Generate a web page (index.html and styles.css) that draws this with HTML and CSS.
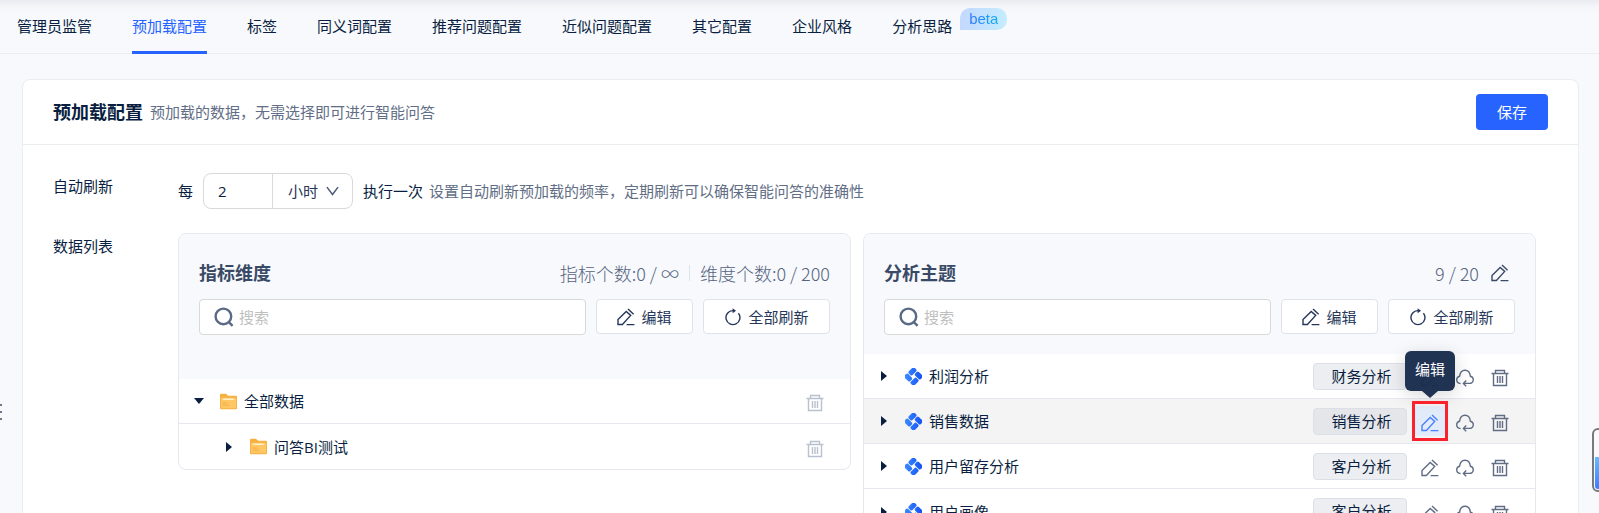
FILE: index.html
```html
<!DOCTYPE html>
<html lang="zh-CN">
<head>
    <meta charset="UTF-8">
    <meta name="viewport" content="width=device-width, initial-scale=1.0">
    <title>预加载配置</title>
    <link rel="stylesheet" href="styles.css">
</head>
<body>
    <!-- Shared icons -->
    <svg class="sprite" aria-hidden="true">
        <defs>
            <linearGradient id="logo-fill" gradientUnits="userSpaceOnUse" x1="2" y1="14" x2="14" y2="2">
                <stop offset="0" stop-color="#3b8cff"/>
                <stop offset="1" stop-color="#1450f5"/>
            </linearGradient>
        </defs>
        <symbol id="icon-edit" viewBox="0 0 18 18">
            <path d="M1 16.5V11.6L9.2 3.4L13.7 7.4L5.4 16.5ZM11 1L16.6 6.2M9.6 16.6H17.4"/>
        </symbol>
        <symbol id="icon-refresh" viewBox="0 0 18 18">
            <path d="M14.4 5.2A7 7 0 1 1 9 2.6H10.6"/>
            <path d="M8.6 .2L12 2.8L8.6 5.2Z" fill="currentColor" stroke="none"/>
        </symbol>
        <symbol id="icon-trash" viewBox="0 0 18 18">
            <path d="M.5 4.5H17.5M4.5 4.5V1.5H13.5V4.5M2.5 4.5V16.5H15.5V4.5M6.5 7V14M9 7V14M11.5 7V14"/>
        </symbol>
        <symbol id="icon-cloud" viewBox="0 0 18 18">
            <path d="M4.6 14.6C2.3 14.4 .7 12.8 .7 10.8C.7 9 1.9 7.6 3.6 7.2C4 3.6 6.1 1.2 9 1.2S14 3.6 14.4 7.2C16.1 7.6 17.3 9 17.3 10.8C17.3 12.9 15.6 14.4 13.3 14.4H7.6M10.2 11.6L7.4 14.4L10.2 17.2"/>
        </symbol>
        <symbol id="icon-search" viewBox="0 0 20 20">
            <path d="M17.2 9.4A7.8 7.8 0 1 1 1.6 9.4A7.8 7.8 0 1 1 17.2 9.4M14.6 14.8L18.6 18.8"/>
        </symbol>
        <symbol id="icon-folder" viewBox="0 0 16 16">
            <path d="M0 1.6Q0 .6 1 .6H5.6L7.6 2.6H15Q16 2.6 16 3.6V14.4Q16 15.4 15 15.4H1Q0 15.4 0 14.4Z" fill="#f5b041"/>
            <path d="M.8 4.4H15.2V14.4H.8Z" fill="#ffc664"/>
            <path d="M3.4 5.2H12.6L13.6 6.6H2.4Z" fill="#fff0c8"/>
            <path d="M2.4 9.5H6.4M2.4 11.5H8.6" stroke="#f5b041"/>
        </symbol>
        <symbol id="icon-logo" viewBox="0 0 16 16">
            <g fill="url(#logo-fill)" transform="rotate(45 8 8)">
                <rect x="1.4" y="1.4" width="4.9" height="7.7" rx="1.5"/>
                <rect x="7.1" y="1.4" width="7.5" height="4.9" rx="1.5"/>
                <rect x="9.7" y="7" width="4.9" height="7.6" rx="1.5"/>
                <rect x="1.4" y="9.8" width="7.5" height="4.8" rx="1.5"/>
            </g>
        </symbol>
    </svg>

    <nav class="tabs">
        <a class="tab" href="#">管理员监管</a>
        <a class="tab active" href="#">预加载配置</a>
        <a class="tab" href="#">标签</a>
        <a class="tab" href="#">同义词配置</a>
        <a class="tab" href="#">推荐问题配置</a>
        <a class="tab" href="#">近似问题配置</a>
        <a class="tab" href="#">其它配置</a>
        <a class="tab" href="#">企业风格</a>
        <a class="tab" href="#">分析思路<span class="beta"><span>beta</span></span></a>
    </nav>

    <main class="card">
        <header class="card-header">
            <h1>预加载配置</h1>
            <p class="hint">预加载的数据，无需选择即可进行智能问答</p>
            <button class="save" type="button">保存</button>
        </header>

        <div class="form">
            <div class="form-row">
                <label class="form-label" for="interval">自动刷新</label>
                <div class="interval">
                    <span>每</span>
                    <div class="interval-box">
                        <input id="interval" type="text" inputmode="numeric" value="2">
                        <div class="unit">
                            <select aria-label="时间单位">
                                <option>小时</option>
                            </select>
                            <svg class="chevron" viewBox="0 0 14 10"><path d="M1 .8L7 8.8L13 .8"/></svg>
                        </div>
                    </div>
                    <span>执行一次</span>
                    <span class="hint">设置自动刷新预加载的频率，定期刷新可以确保智能问答的准确性</span>
                </div>
            </div>

            <div class="form-row">
                <span class="form-label">数据列表</span>
                <div class="panels">
                    <section class="panel">
                        <div class="panel-head tall">
                            <div class="panel-title">
                                <h2>指标维度</h2>
                                <span class="count">指标个数:0 / ∞</span>
                                <i class="divider"></i>
                                <span class="count">维度个数:0 / 200</span>
                            </div>
                            <div class="toolbar">
                                <label class="search">
                                    <svg class="icon-search"><use href="#icon-search"/></svg>
                                    <input type="text" placeholder="搜索" aria-label="搜索指标维度">
                                </label>
                                <button class="tool edit" type="button"><svg class="icon"><use href="#icon-edit"/></svg>编辑</button>
                                <button class="tool refresh" type="button"><svg class="icon"><use href="#icon-refresh"/></svg>全部刷新</button>
                            </div>
                        </div>
                        <ul class="list">
                            <li class="row">
                                <button class="caret open" type="button" aria-label="收起"></button>
                                <svg class="type"><use href="#icon-folder"/></svg>
                                <span class="name">全部数据</span>
                                <button class="icon-btn muted" type="button" aria-label="删除"><svg class="icon"><use href="#icon-trash"/></svg></button>
                            </li>
                            <li class="row child">
                                <button class="caret" type="button" aria-label="展开"></button>
                                <svg class="type"><use href="#icon-folder"/></svg>
                                <span class="name">问答BI测试</span>
                                <button class="icon-btn muted" type="button" aria-label="删除"><svg class="icon"><use href="#icon-trash"/></svg></button>
                            </li>
                        </ul>
                    </section>

                    <section class="panel">
                        <div class="panel-head">
                            <div class="panel-title">
                                <h2>分析主题</h2>
                                <span class="count">9 / 20</span>
                                <button class="icon-btn title-edit" type="button" aria-label="编辑上限"><svg class="icon"><use href="#icon-edit"/></svg></button>
                            </div>
                            <div class="toolbar">
                                <label class="search">
                                    <svg class="icon-search"><use href="#icon-search"/></svg>
                                    <input type="text" placeholder="搜索" aria-label="搜索分析主题">
                                </label>
                                <button class="tool edit" type="button"><svg class="icon"><use href="#icon-edit"/></svg>编辑</button>
                                <button class="tool refresh" type="button"><svg class="icon"><use href="#icon-refresh"/></svg>全部刷新</button>
                            </div>
                        </div>
                        <ul class="list">
                            <li class="row">
                                <button class="caret" type="button" aria-label="展开"></button>
                                <svg class="type"><use href="#icon-logo"/></svg>
                                <span class="name">利润分析</span>
                                <span class="tag">财务分析</span>
                                <div class="actions">
                                    <button class="icon-btn" type="button" aria-label="编辑"><svg class="icon"><use href="#icon-edit"/></svg></button>
                                    <button class="icon-btn" type="button" aria-label="同步"><svg class="icon"><use href="#icon-cloud"/></svg></button>
                                    <button class="icon-btn" type="button" aria-label="删除"><svg class="icon"><use href="#icon-trash"/></svg></button>
                                </div>
                            </li>
                            <li class="row hovered">
                                <button class="caret" type="button" aria-label="展开"></button>
                                <svg class="type"><use href="#icon-logo"/></svg>
                                <span class="name">销售数据</span>
                                <span class="tag">销售分析</span>
                                <div class="actions">
                                    <button class="icon-btn focused" type="button" aria-describedby="tip"><svg class="icon"><use href="#icon-edit"/></svg><span class="tooltip" id="tip" role="tooltip">编辑</span></button>
                                    <button class="icon-btn" type="button" aria-label="同步"><svg class="icon"><use href="#icon-cloud"/></svg></button>
                                    <button class="icon-btn" type="button" aria-label="删除"><svg class="icon"><use href="#icon-trash"/></svg></button>
                                </div>
                            </li>
                            <li class="row">
                                <button class="caret" type="button" aria-label="展开"></button>
                                <svg class="type"><use href="#icon-logo"/></svg>
                                <span class="name">用户留存分析</span>
                                <span class="tag">客户分析</span>
                                <div class="actions">
                                    <button class="icon-btn" type="button" aria-label="编辑"><svg class="icon"><use href="#icon-edit"/></svg></button>
                                    <button class="icon-btn" type="button" aria-label="同步"><svg class="icon"><use href="#icon-cloud"/></svg></button>
                                    <button class="icon-btn" type="button" aria-label="删除"><svg class="icon"><use href="#icon-trash"/></svg></button>
                                </div>
                            </li>
                            <li class="row">
                                <button class="caret" type="button" aria-label="展开"></button>
                                <svg class="type"><use href="#icon-logo"/></svg>
                                <span class="name">用户画像</span>
                                <span class="tag">客户分析</span>
                                <div class="actions">
                                    <button class="icon-btn" type="button" aria-label="编辑"><svg class="icon"><use href="#icon-edit"/></svg></button>
                                    <button class="icon-btn" type="button" aria-label="同步"><svg class="icon"><use href="#icon-cloud"/></svg></button>
                                    <button class="icon-btn" type="button" aria-label="删除"><svg class="icon"><use href="#icon-trash"/></svg></button>
                                </div>
                            </li>
                        </ul>
                    </section>
                </div>
            </div>
        </div>
    </main>

    <!-- Sidebar drag handle and floating assistant, both partly off screen -->
    <div class="drag-handle"><i></i><i></i><i></i></div>
    <div class="assistant"></div>
</body>
</html>
```

FILE: styles.css
```css
* {
    box-sizing: border-box;
}

body {
    margin: 0;
    height: 100vh;
    overflow: hidden;
    position: relative;
    background: #f7f9fd;
    color: #091e40;
    font-family: "Open Sans", "Noto Sans CJK SC", sans-serif;
    font-size: 15px;
    line-height: 26px;
}

h1, h2, p, ul {
    margin: 0;
    padding: 0;
}

button, input, select {
    font: inherit;
    color: inherit;
    margin: 0;
    padding: 0;
    border: none;
    background: none;
    outline: none;
}

button {
    cursor: pointer;
}

.sprite {
    position: absolute;
    width: 0;
    height: 0;
}

/* Tabs */
.tabs {
    display: flex;
    gap: 40px;
    height: 54px;
    padding: 0 17px;
    border-bottom: 1px solid #ebedf2;
    background: linear-gradient(#e9ebf0, #f4f6fa 7px, #f7f9fd 14px);
}

.tab {
    position: relative;
    height: 54px;
    line-height: 52px;
    color: inherit;
    text-decoration: none;
    white-space: nowrap;
}

.tab.active {
    color: #2663ff;
    border-bottom: 3px solid #2663ff;
}

.beta {
    position: absolute;
    left: 100%;
    top: 8px;
    height: 22px;
    margin-left: 8px;
    padding: 0 9px;
    border-radius: 10px 10px 10px 0;
    background: linear-gradient(90deg, #c3d8fd, #c4ecfe);
    font-family: "Liberation Sans", Arial, sans-serif;
    line-height: 22px;
}

.beta span {
    background: linear-gradient(90deg, #2f74ff, #12aef2);
    -webkit-background-clip: text;
    background-clip: text;
    color: transparent;
}

/* Card */
.card {
    min-height: 600px;
    margin: 25px 20px 0 22px;
    border: 1px solid #ebedf0;
    border-radius: 8px;
    background: #fff;
}

.card-header {
    display: flex;
    align-items: center;
    height: 65px;
    padding: 0 30px;
    border-bottom: 1px solid #ebedf0;
}

h1, h2 {
    font-size: 18px;
    font-weight: bold;
}

h2 {
    color: #3a4a66;
}

.card-header .hint {
    margin-left: 7px;
}

.hint {
    color: #616e85;
}

.save {
    width: 72px;
    height: 36px;
    margin-left: auto;
    border-radius: 4px;
    background: #2663ff;
    color: #fff;
}

.form {
    display: flex;
    flex-direction: column;
    gap: 24px;
    padding: 28px 42px 28px 30px;
}

.form-row {
    display: flex;
    align-items: flex-start;
}

.form-label {
    flex: 0 0 125px;
}

.interval {
    display: flex;
    align-items: center;
    height: 36px;
}

.interval-box {
    display: flex;
    width: 150px;
    height: 36px;
    margin: 0 10px;
    border: 1px solid #d9d9d9;
    border-radius: 8px;
}

.interval-box input {
    width: 69px;
    padding-left: 14px;
    border-right: 1px solid #d9d9d9;
}

.unit {
    display: flex;
    flex: 1;
    align-items: center;
    padding-left: 15px;
    color: #26375a;
}

.unit select {
    appearance: none;
    width: 38px;
}

.chevron {
    width: 13px;
    height: 10px;
    fill: none;
    stroke: #4a5a78;
    stroke-width: 1.6;
}

.interval .hint {
    margin-left: 6px;
}

/* Panels */
.panels {
    display: grid;
    grid-template-columns: 1fr 1fr;
    flex: 1;
    gap: 12px;
    align-items: start;
}

.panel {
    border: 1px solid #e6e8f0;
    border-radius: 8px;
}

.panel-head {
    padding: 24px 20px 19px;
    border-radius: 8px 8px 0 0;
    background: #f7f9fd;
}

.panel-head.tall {
    padding-bottom: 44px;
}

.panel-title {
    display: flex;
    align-items: center;
    height: 30px;
}

.panel-title h2 {
    margin-right: auto;
}

.count {
    color: #56647e;
    font-family: "Noto Sans CJK SC", sans-serif;
    font-size: 18px;
    font-weight: 300;
}

.divider {
    width: 1px;
    height: 16px;
    margin: 0 10px;
    background: #dfe2ea;
}

.toolbar {
    display: flex;
    gap: 10px;
    margin-top: 11px;
}

.search {
    display: flex;
    flex: 1;
    align-items: center;
    gap: 5px;
    height: 36px;
    padding: 0 14px;
    border: 1px solid #d9d9d9;
    border-radius: 4px;
    background: #fff;
}

.search input {
    flex: 1;
    min-width: 0;
}

.search input::placeholder {
    color: #bfbfbf;
    opacity: 1;
}

.icon-search {
    width: 20px;
    height: 20px;
    fill: none;
    stroke: #5a6a85;
    stroke-width: 2.4;
}

.icon {
    flex: none;
    width: 18px;
    height: 18px;
    fill: none;
    stroke: currentColor;
    stroke-width: 1.4;
}

.tool {
    display: flex;
    align-items: center;
    justify-content: center;
    gap: 6px;
    height: 35px;
    border: 1px solid #dfe2ea;
    border-radius: 4px;
    background: #fff;
    color: #26375a;
}

.tool.edit {
    width: 97px;
}

.tool.refresh {
    width: 127px;
}

.list {
    list-style: none;
}

.row {
    display: flex;
    align-items: center;
    height: 45px;
    padding: 0 20px 0 16px;
    border-bottom: 1px solid #e6e8f0;
}

.row:last-child {
    border-bottom: none;
}

.row.child {
    padding-left: 46px;
}

.row.hovered {
    background: #f4f4f4;
}

.caret {
    display: flex;
    align-items: center;
    justify-content: center;
    width: 8px;
    height: 20px;
}

.caret::before {
    content: "";
    border: 5px solid transparent;
    border-left: 6px solid #091e40;
    border-right: none;
}

.caret.open::before {
    border: 5px solid transparent;
    border-top: 6px solid #091e40;
    border-bottom: none;
}

.type {
    width: 17px;
    height: 17px;
    margin: 0 7px 0 17px;
}

.name {
    margin-right: auto;
}

.tag {
    width: 94px;
    height: 27px;
    margin-right: 8px;
    padding-left: 3px;
    border: 1px solid #dcdfe8;
    border-radius: 4px;
    background: #edeef2;
    line-height: 25px;
    text-align: center;
}

.hovered .tag {
    background: #e5e6ea;
}

.actions {
    display: flex;
    gap: 5px;
}

.icon-btn {
    position: relative;
    display: flex;
    align-items: center;
    justify-content: center;
    width: 30px;
    height: 30px;
    padding-top: 4px;
    border-radius: 4px;
    color: #5f6c84;
}

.icon-btn.title-edit {
    margin-left: 6px;
    padding-top: 0;
    color: #3a4a66;
}

.icon-btn.muted {
    color: #b9c1ce;
}

.icon-btn.focused {
    background: #e2ebfa;
    color: #4a80ff;
}

.icon-btn.focused::after {
    content: "";
    position: absolute;
    inset: -5px -3px;
    border: 3px solid #fa232d;
}

.tooltip {
    position: absolute;
    bottom: 45px;
    left: 50%;
    width: 50px;
    height: 40px;
    margin-left: -25px;
    border-radius: 6px;
    background: rgba(24, 43, 76, 0.96);
    box-shadow: 0 4px 18px rgba(0, 0, 0, 0.16);
    color: #fff;
    line-height: 36px;
    text-align: center;
}

.tooltip::after {
    content: "";
    position: absolute;
    top: 100%;
    left: 50%;
    margin-left: -8px;
    border: 8px solid transparent;
    border-top: 7px solid rgba(24, 43, 76, 0.96);
    border-bottom: none;
}

/* Floating edges */
.drag-handle {
    position: absolute;
    left: 0;
    top: 404px;
    display: flex;
    flex-direction: column;
    gap: 5px;
}

.drag-handle i {
    width: 2px;
    height: 2px;
    background: #6b7488;
}

.assistant {
    position: absolute;
    right: -13px;
    top: 428px;
    width: 20px;
    height: 64px;
    padding: 1px;
    border: 2px solid #77797d;
    border-radius: 6px;
    background: linear-gradient(#f7f9fd 26px, #62bdff 26px, #3d7dff) content-box;
}
```
